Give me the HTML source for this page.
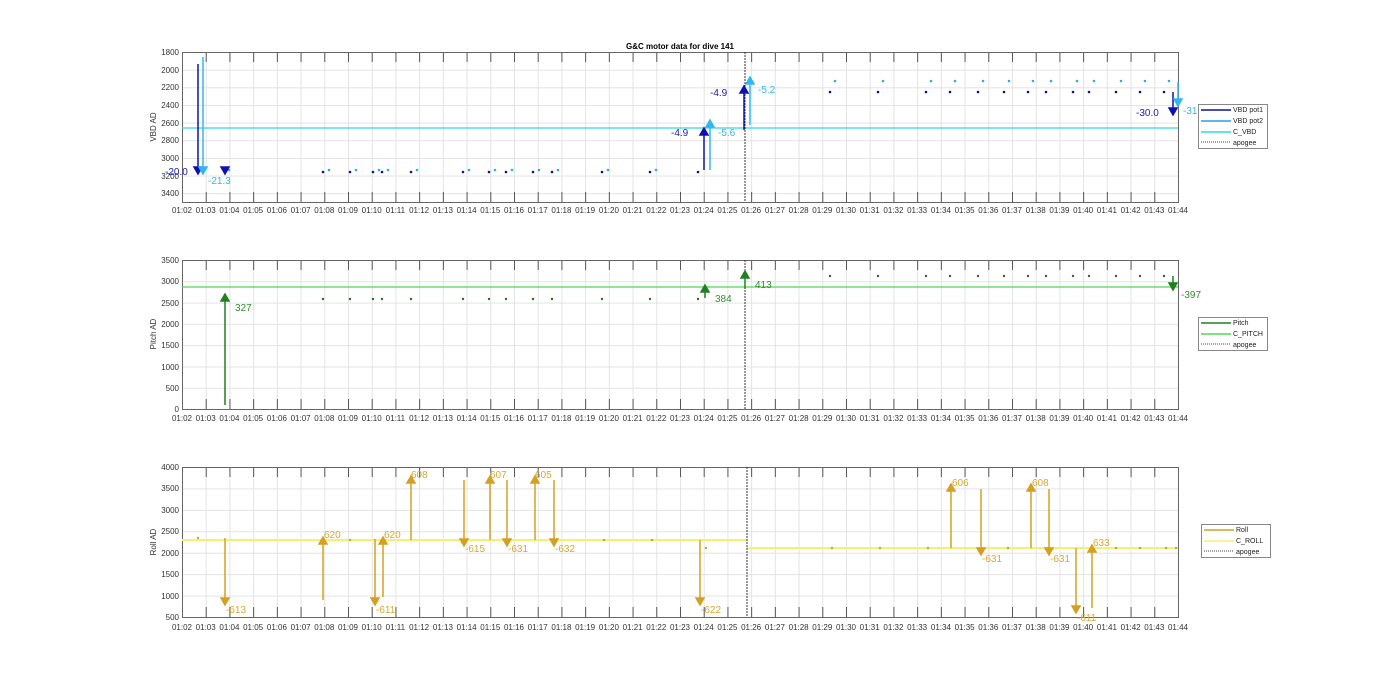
<!DOCTYPE html><html><head><style>body{margin:0;background:#fff}svg{display:block}text{font-family:"Liberation Sans",sans-serif}</style></head><body>
<svg width="1400" height="693" viewBox="0 0 1400 693" xmlns="http://www.w3.org/2000/svg">
<defs>
<pattern id="gv" x="182" y="0" width="23.714" height="10" patternUnits="userSpaceOnUse"><line x1="0.5" y1="0" x2="0.5" y2="10" stroke="#e3e3e3" stroke-width="1"/></pattern>
<pattern id="h1" x="0" y="52" width="10" height="17.65" patternUnits="userSpaceOnUse"><line x1="0" y1="0.5" x2="10" y2="0.5" stroke="#e3e3e3"/></pattern>
<pattern id="h2" x="0" y="260" width="10" height="21.29" patternUnits="userSpaceOnUse"><line x1="0" y1="0.5" x2="10" y2="0.5" stroke="#e3e3e3"/></pattern>
<pattern id="h3" x="0" y="467" width="10" height="21.43" patternUnits="userSpaceOnUse"><line x1="0" y1="0.5" x2="10" y2="0.5" stroke="#e3e3e3"/></pattern>
<pattern id="tk" x="182" y="0" width="23.714" height="700" patternUnits="userSpaceOnUse"><line x1="0.5" y1="0" x2="0.5" y2="700" stroke="#555"/></pattern>
</defs>
<text x="680" y="49" font-size="8" font-weight="bold" text-anchor="middle" fill="#000">G&amp;C motor data for dive 141</text>
<!-- grids -->
<g>
<rect x="182" y="52" width="996" height="150" fill="url(#gv)"/><rect x="182" y="52" width="996" height="150" fill="url(#h1)"/>
<rect x="182" y="260" width="996" height="149" fill="url(#gv)"/><rect x="182" y="260" width="996" height="149" fill="url(#h2)"/>
<rect x="182" y="467" width="996" height="150" fill="url(#gv)"/><rect x="182" y="467" width="996" height="150" fill="url(#h3)"/>
<!-- tick marks top/bottom -->
<rect x="182" y="52" width="997" height="10" fill="url(#tk)"/><rect x="182" y="192" width="997" height="10" fill="url(#tk)"/>
<rect x="182" y="260" width="997" height="10" fill="url(#tk)"/><rect x="182" y="399" width="997" height="10" fill="url(#tk)"/>
<rect x="182" y="467" width="997" height="10" fill="url(#tk)"/><rect x="182" y="607" width="997" height="10" fill="url(#tk)"/>
<rect x="182.5" y="52.5" width="996" height="150" fill="none" stroke="#666"/>
<rect x="182.5" y="260.5" width="996" height="149" fill="none" stroke="#666"/>
<rect x="182.5" y="467.5" width="996" height="150" fill="none" stroke="#666"/>
</g>
<g font-size="8" fill="#333" text-anchor="end">
<text x="179" y="55">1800</text><text x="179" y="73">2000</text><text x="179" y="90">2200</text><text x="179" y="108">2400</text><text x="179" y="126">2600</text><text x="179" y="143">2800</text><text x="179" y="161">3000</text><text x="179" y="179">3200</text><text x="179" y="196">3400</text>
<text x="179" y="263">3500</text><text x="179" y="284">3000</text><text x="179" y="306">2500</text><text x="179" y="327">2000</text><text x="179" y="348">1500</text><text x="179" y="370">1000</text><text x="179" y="391">500</text><text x="179" y="412">0</text>
<text x="179" y="470">4000</text><text x="179" y="491">3500</text><text x="179" y="513">3000</text><text x="179" y="534">2500</text><text x="179" y="556">2000</text><text x="179" y="577">1500</text><text x="179" y="599">1000</text><text x="179" y="620">500</text>
</g>
<g font-size="8" fill="#333">
<text transform="translate(156,127) rotate(-90)" text-anchor="middle">VBD AD</text>
<text transform="translate(156,334) rotate(-90)" text-anchor="middle">Pitch AD</text>
<text transform="translate(156,542) rotate(-90)" text-anchor="middle">Roll AD</text>
</g>
<g id="xl" font-size="8" fill="#333" text-anchor="middle">
<text x="182" y="213">01:02</text><text x="205.7" y="213">01:03</text><text x="229.4" y="213">01:04</text><text x="253.1" y="213">01:05</text><text x="276.9" y="213">01:06</text><text x="300.6" y="213">01:07</text><text x="324.3" y="213">01:08</text><text x="348" y="213">01:09</text><text x="371.7" y="213">01:10</text><text x="395.4" y="213">01:11</text><text x="419.1" y="213">01:12</text><text x="442.9" y="213">01:13</text><text x="466.6" y="213">01:14</text><text x="490.3" y="213">01:15</text><text x="514" y="213">01:16</text><text x="537.7" y="213">01:17</text><text x="561.4" y="213">01:18</text><text x="585.1" y="213">01:19</text><text x="608.9" y="213">01:20</text><text x="632.6" y="213">01:21</text><text x="656.3" y="213">01:22</text><text x="680" y="213">01:23</text><text x="703.7" y="213">01:24</text><text x="727.4" y="213">01:25</text><text x="751.1" y="213">01:26</text><text x="774.9" y="213">01:27</text><text x="798.6" y="213">01:28</text><text x="822.3" y="213">01:29</text><text x="846" y="213">01:30</text><text x="869.7" y="213">01:31</text><text x="893.4" y="213">01:32</text><text x="917.1" y="213">01:33</text><text x="940.9" y="213">01:34</text><text x="964.6" y="213">01:35</text><text x="988.3" y="213">01:36</text><text x="1012" y="213">01:37</text><text x="1035.7" y="213">01:38</text><text x="1059.4" y="213">01:39</text><text x="1083.1" y="213">01:40</text><text x="1106.9" y="213">01:41</text><text x="1130.6" y="213">01:42</text><text x="1154.3" y="213">01:43</text><text x="1178" y="213">01:44</text>
</g>
<g font-size="8" fill="#333" text-anchor="middle">
<text x="182" y="421">01:02</text><text x="205.7" y="421">01:03</text><text x="229.4" y="421">01:04</text><text x="253.1" y="421">01:05</text><text x="276.9" y="421">01:06</text><text x="300.6" y="421">01:07</text><text x="324.3" y="421">01:08</text><text x="348" y="421">01:09</text><text x="371.7" y="421">01:10</text><text x="395.4" y="421">01:11</text><text x="419.1" y="421">01:12</text><text x="442.9" y="421">01:13</text><text x="466.6" y="421">01:14</text><text x="490.3" y="421">01:15</text><text x="514" y="421">01:16</text><text x="537.7" y="421">01:17</text><text x="561.4" y="421">01:18</text><text x="585.1" y="421">01:19</text><text x="608.9" y="421">01:20</text><text x="632.6" y="421">01:21</text><text x="656.3" y="421">01:22</text><text x="680" y="421">01:23</text><text x="703.7" y="421">01:24</text><text x="727.4" y="421">01:25</text><text x="751.1" y="421">01:26</text><text x="774.9" y="421">01:27</text><text x="798.6" y="421">01:28</text><text x="822.3" y="421">01:29</text><text x="846" y="421">01:30</text><text x="869.7" y="421">01:31</text><text x="893.4" y="421">01:32</text><text x="917.1" y="421">01:33</text><text x="940.9" y="421">01:34</text><text x="964.6" y="421">01:35</text><text x="988.3" y="421">01:36</text><text x="1012" y="421">01:37</text><text x="1035.7" y="421">01:38</text><text x="1059.4" y="421">01:39</text><text x="1083.1" y="421">01:40</text><text x="1106.9" y="421">01:41</text><text x="1130.6" y="421">01:42</text><text x="1154.3" y="421">01:43</text><text x="1178" y="421">01:44</text>
</g>
<g font-size="8" fill="#333" text-anchor="middle">
<text x="182" y="630">01:02</text><text x="205.7" y="630">01:03</text><text x="229.4" y="630">01:04</text><text x="253.1" y="630">01:05</text><text x="276.9" y="630">01:06</text><text x="300.6" y="630">01:07</text><text x="324.3" y="630">01:08</text><text x="348" y="630">01:09</text><text x="371.7" y="630">01:10</text><text x="395.4" y="630">01:11</text><text x="419.1" y="630">01:12</text><text x="442.9" y="630">01:13</text><text x="466.6" y="630">01:14</text><text x="490.3" y="630">01:15</text><text x="514" y="630">01:16</text><text x="537.7" y="630">01:17</text><text x="561.4" y="630">01:18</text><text x="585.1" y="630">01:19</text><text x="608.9" y="630">01:20</text><text x="632.6" y="630">01:21</text><text x="656.3" y="630">01:22</text><text x="680" y="630">01:23</text><text x="703.7" y="630">01:24</text><text x="727.4" y="630">01:25</text><text x="751.1" y="630">01:26</text><text x="774.9" y="630">01:27</text><text x="798.6" y="630">01:28</text><text x="822.3" y="630">01:29</text><text x="846" y="630">01:30</text><text x="869.7" y="630">01:31</text><text x="893.4" y="630">01:32</text><text x="917.1" y="630">01:33</text><text x="940.9" y="630">01:34</text><text x="964.6" y="630">01:35</text><text x="988.3" y="630">01:36</text><text x="1012" y="630">01:37</text><text x="1035.7" y="630">01:38</text><text x="1059.4" y="630">01:39</text><text x="1083.1" y="630">01:40</text><text x="1106.9" y="630">01:41</text><text x="1130.6" y="630">01:42</text><text x="1154.3" y="630">01:43</text><text x="1178" y="630">01:44</text>
</g>

<!-- PLOT 1 -->
<line x1="182" y1="128" x2="1178" y2="128" stroke="#30d8e8" stroke-width="1.2"/>
<line x1="745" y1="52" x2="745" y2="202" stroke="#333" stroke-dasharray="2,1"/>
<g fill="#101090">
<circle cx="323" cy="172" r="1.3"/><circle cx="350" cy="172" r="1.3"/><circle cx="373" cy="172" r="1.3"/><circle cx="382" cy="172" r="1.3"/><circle cx="411" cy="172" r="1.3"/><circle cx="463" cy="172" r="1.3"/><circle cx="489" cy="172" r="1.3"/><circle cx="506" cy="172" r="1.3"/><circle cx="533" cy="172" r="1.3"/><circle cx="552" cy="172" r="1.3"/><circle cx="602" cy="172" r="1.3"/><circle cx="650" cy="172" r="1.3"/><circle cx="698" cy="172" r="1.3"/>
<circle cx="830" cy="92" r="1.3"/><circle cx="878" cy="92" r="1.3"/><circle cx="926" cy="92" r="1.3"/><circle cx="950" cy="92" r="1.3"/><circle cx="978" cy="92" r="1.3"/><circle cx="1004" cy="92" r="1.3"/><circle cx="1028" cy="92" r="1.3"/><circle cx="1046" cy="92" r="1.3"/><circle cx="1073" cy="92" r="1.3"/><circle cx="1089" cy="92" r="1.3"/><circle cx="1116" cy="92" r="1.3"/><circle cx="1140" cy="92" r="1.3"/><circle cx="1164" cy="92" r="1.3"/>
</g>
<g fill="#28b0e8">
<circle cx="329" cy="170" r="1.3"/><circle cx="356" cy="170" r="1.3"/><circle cx="379" cy="170" r="1.3"/><circle cx="388" cy="170" r="1.3"/><circle cx="417" cy="170" r="1.3"/><circle cx="469" cy="170" r="1.3"/><circle cx="495" cy="170" r="1.3"/><circle cx="512" cy="170" r="1.3"/><circle cx="539" cy="170" r="1.3"/><circle cx="558" cy="170" r="1.3"/><circle cx="608" cy="170" r="1.3"/><circle cx="656" cy="170" r="1.3"/><circle cx="229" cy="170" r="1.3"/>
<circle cx="835" cy="81" r="1.3"/><circle cx="883" cy="81" r="1.3"/><circle cx="931" cy="81" r="1.3"/><circle cx="955" cy="81" r="1.3"/><circle cx="983" cy="81" r="1.3"/><circle cx="1009" cy="81" r="1.3"/><circle cx="1033" cy="81" r="1.3"/><circle cx="1051" cy="81" r="1.3"/><circle cx="1077" cy="81" r="1.3"/><circle cx="1094" cy="81" r="1.3"/><circle cx="1121" cy="81" r="1.3"/><circle cx="1145" cy="81" r="1.3"/><circle cx="1169" cy="81" r="1.3"/>
</g>
<g stroke="#1010b0" stroke-width="1.5" fill="#1010b0">
<line x1="198" y1="64" x2="198" y2="168"/><path d="M194 167h8l-4 7z"/>
<path d="M221 167h8l-4 7z"/>
<line x1="704" y1="170" x2="704" y2="134"/><path d="M700 135h8l-4-7z"/>
<line x1="744" y1="130" x2="744" y2="92"/><path d="M740 93h8l-4-7z"/>
<line x1="1173" y1="92" x2="1173" y2="109"/><path d="M1169 108h8l-4 7z"/>
</g>
<g stroke="#30b8ec" stroke-width="1.5" fill="#30b8ec">
<line x1="203" y1="57" x2="203" y2="168"/><path d="M199 167h8l-4 7z"/>
<line x1="710" y1="170" x2="710" y2="126"/><path d="M706 127h8l-4-7z"/>
<line x1="750" y1="125" x2="750" y2="83"/><path d="M746 84h8l-4-7z"/>
<line x1="1178" y1="82" x2="1178" y2="99"/><path d="M1174 99h8l-4 7z"/>
</g>
<g font-size="10">
<text x="165" y="175" fill="#2020b0">-20.0</text><text x="208" y="184" fill="#30b8ec">-21.3</text>
<text x="671" y="136" fill="#2020b0">-4.9</text><text x="718" y="136" fill="#30b8ec">-5.6</text>
<text x="710" y="96" fill="#2020b0">-4.9</text><text x="758" y="93" fill="#30b8ec">-5.2</text>
<text x="1136" y="116" fill="#2020b0">-30.0</text><text x="1183" y="114" fill="#30b8ec">-31</text>
</g>
<g font-size="7" fill="#222">
<rect x="1198.5" y="104.5" width="69" height="44" fill="#fff" stroke="#888"/>
<line x1="1201" y1="110" x2="1231" y2="110" stroke="#101090" stroke-width="1.5"/><text x="1233" y="112">VBD pot1</text>
<line x1="1201" y1="121" x2="1231" y2="121" stroke="#28a0e8" stroke-width="1.5"/><text x="1233" y="123">VBD pot2</text>
<line x1="1201" y1="132" x2="1231" y2="132" stroke="#30d8e8" stroke-width="1.5"/><text x="1233" y="134">C_VBD</text>
<line x1="1201" y1="142" x2="1231" y2="142" stroke="#444" stroke-dasharray="1,1"/><text x="1233" y="145">apogee</text>
</g>

<!-- PLOT 2 -->
<line x1="182" y1="287" x2="1178" y2="287" stroke="#50d850" stroke-width="1.2"/>
<line x1="745" y1="260" x2="745" y2="409" stroke="#333" stroke-dasharray="2,1"/>
<g fill="#207020">
<circle cx="323" cy="299" r="1.2"/><circle cx="350" cy="299" r="1.2"/><circle cx="373" cy="299" r="1.2"/><circle cx="382" cy="299" r="1.2"/><circle cx="411" cy="299" r="1.2"/><circle cx="463" cy="299" r="1.2"/><circle cx="489" cy="299" r="1.2"/><circle cx="506" cy="299" r="1.2"/><circle cx="533" cy="299" r="1.2"/><circle cx="552" cy="299" r="1.2"/><circle cx="602" cy="299" r="1.2"/><circle cx="650" cy="299" r="1.2"/><circle cx="698" cy="299" r="1.2"/>
<circle cx="830" cy="276" r="1.2"/><circle cx="878" cy="276" r="1.2"/><circle cx="926" cy="276" r="1.2"/><circle cx="950" cy="276" r="1.2"/><circle cx="978" cy="276" r="1.2"/><circle cx="1004" cy="276" r="1.2"/><circle cx="1028" cy="276" r="1.2"/><circle cx="1046" cy="276" r="1.2"/><circle cx="1073" cy="276" r="1.2"/><circle cx="1089" cy="276" r="1.2"/><circle cx="1116" cy="276" r="1.2"/><circle cx="1140" cy="276" r="1.2"/><circle cx="1164" cy="276" r="1.2"/>
</g>
<g stroke="#208020" stroke-width="1.5" fill="#208020">
<line x1="225" y1="405" x2="225" y2="300"/><path d="M221 301h8l-4-7z"/>
<line x1="705" y1="298" x2="705" y2="291"/><path d="M701 292h8l-4-7z"/>
<line x1="745" y1="289" x2="745" y2="277"/><path d="M741 278h8l-4-7z"/>
<line x1="1173" y1="276" x2="1173" y2="284"/><path d="M1169 283h8l-4 7z"/>
</g>
<g font-size="10" fill="#309030">
<text x="235" y="311">327</text><text x="715" y="302">384</text><text x="755" y="288">413</text><text x="1181" y="298">-397</text>
</g>
<g font-size="7" fill="#222">
<rect x="1198.5" y="317.5" width="69" height="33" fill="#fff" stroke="#888"/>
<line x1="1201" y1="323" x2="1231" y2="323" stroke="#208020" stroke-width="1.5"/><text x="1233" y="325">Pitch</text>
<line x1="1201" y1="334" x2="1231" y2="334" stroke="#50d850" stroke-width="1.5"/><text x="1233" y="336">C_PITCH</text>
<line x1="1201" y1="344" x2="1231" y2="344" stroke="#444" stroke-dasharray="1,1"/><text x="1233" y="347">apogee</text>
</g>

<!-- PLOT 3 -->
<line x1="182" y1="540" x2="747" y2="540" stroke="#f4f070" stroke-width="2"/>
<line x1="747" y1="548" x2="1178" y2="548" stroke="#f4f070" stroke-width="2"/>
<line x1="747" y1="467" x2="747" y2="617" stroke="#333" stroke-dasharray="2,1"/>
<g fill="#c8a030">
<circle cx="198" cy="538" r="1.2"/><circle cx="350" cy="540" r="1.2"/><circle cx="604" cy="540" r="1.2"/><circle cx="652" cy="540" r="1.2"/><circle cx="706" cy="548" r="1.2"/><circle cx="832" cy="548" r="1.2"/><circle cx="880" cy="548" r="1.2"/><circle cx="928" cy="548" r="1.2"/><circle cx="1008" cy="548" r="1.2"/><circle cx="1116" cy="548" r="1.2"/><circle cx="1140" cy="548" r="1.2"/><circle cx="1166" cy="548" r="1.2"/><circle cx="1176" cy="548" r="1.2"/>
</g>
<g stroke="#d4a020" stroke-width="1.5" fill="#d4a020">
<line x1="225" y1="538" x2="225" y2="598"/><path d="M221 598h8l-4 7z"/>
<line x1="323" y1="600" x2="323" y2="543"/><path d="M319 544h8l-4-7z"/>
<line x1="375" y1="539" x2="375" y2="598"/><path d="M371 598h8l-4 7z"/>
<line x1="383" y1="597" x2="383" y2="543"/><path d="M379 544h8l-4-7z"/>
<line x1="411" y1="540" x2="411" y2="482"/><path d="M407 483h8l-4-7z"/>
<line x1="464" y1="480" x2="464" y2="539"/><path d="M460 539h8l-4 7z"/>
<line x1="490" y1="540" x2="490" y2="482"/><path d="M486 483h8l-4-7z"/>
<line x1="507" y1="480" x2="507" y2="539"/><path d="M503 539h8l-4 7z"/>
<line x1="535" y1="540" x2="535" y2="482"/><path d="M531 483h8l-4-7z"/>
<line x1="554" y1="480" x2="554" y2="539"/><path d="M550 539h8l-4 7z"/>
<line x1="700" y1="540" x2="700" y2="598"/><path d="M696 598h8l-4 7z"/>
<line x1="951" y1="548" x2="951" y2="490"/><path d="M947 491h8l-4-7z"/>
<line x1="981" y1="489" x2="981" y2="548"/><path d="M977 548h8l-4 7z"/>
<line x1="1031" y1="548" x2="1031" y2="490"/><path d="M1027 491h8l-4-7z"/>
<line x1="1049" y1="489" x2="1049" y2="548"/><path d="M1045 548h8l-4 7z"/>
<line x1="1076" y1="548" x2="1076" y2="606"/><path d="M1072 606h8l-4 7z"/>
<line x1="1092" y1="608" x2="1092" y2="551"/><path d="M1088 552h8l-4-7z"/>
</g>
<g font-size="10" fill="#d8a830">
<text x="226" y="613">-613</text><text x="324" y="538">620</text><text x="376" y="613">-611</text><text x="384" y="538">620</text><text x="411" y="478">608</text><text x="465" y="552">-615</text><text x="490" y="478">607</text><text x="508" y="552">-631</text><text x="535" y="478">605</text><text x="555" y="552">-632</text><text x="701" y="613">-622</text>
<text x="952" y="486">606</text><text x="982" y="562">-631</text><text x="1032" y="486">608</text><text x="1050" y="562">-631</text><text x="1077" y="621">-611</text><text x="1093" y="546">633</text>
</g>
<g font-size="7" fill="#222">
<rect x="1201.5" y="524.5" width="69" height="33" fill="#fff" stroke="#888"/>
<line x1="1204" y1="530" x2="1234" y2="530" stroke="#d4a020" stroke-width="1.5"/><text x="1236" y="532">Roll</text>
<line x1="1204" y1="541" x2="1234" y2="541" stroke="#f4f070" stroke-width="1.5"/><text x="1236" y="543">C_ROLL</text>
<line x1="1204" y1="551" x2="1234" y2="551" stroke="#444" stroke-dasharray="1,1"/><text x="1236" y="554">apogee</text>
</g>
</svg>
</body></html>
